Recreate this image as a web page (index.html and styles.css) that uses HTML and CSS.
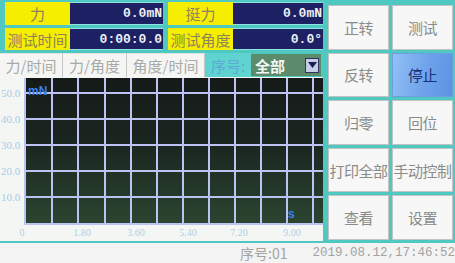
FILE: index.html
```html
<!DOCTYPE html>
<html lang="zh">
<head>
<meta charset="utf-8">
<title>测试</title>
<link rel="stylesheet" href="styles.css">
</head>
<body>
<div class="screen">
  <div class="left">
    <div class="readings">
      <div class="lbl">力</div><div class="val">0.0mN</div>
      <div class="lbl lbl2">挺力</div><div class="val">0.0mN</div>
      <div class="lbl">测试时间</div><div class="val">0:00:0.0</div>
      <div class="lbl lbl2">测试角度</div><div class="val">0.0°</div>
    </div>
    <div class="tabs">
      <div class="tab t1">力/时间</div>
      <div class="tab t2">力/角度</div>
      <div class="tab t3">角度/时间</div>
      <div class="seq">序号:</div>
      <div class="select"><span class="sel-text">全部</span><span class="arrow"><svg width="9" height="6" viewBox="0 0 9 6"><path d="M0 0H9L4.5 6Z" fill="#1a1f50"/></svg></span></div>
    </div>
    <div class="chart">
      <svg width="323" height="166" viewBox="0 0 323 166">
        <defs>
          <linearGradient id="pg" x1="0" y1="0" x2="0" y2="1">
            <stop offset="0" stop-color="#151a18"/>
            <stop offset="0.45" stop-color="#1b2620"/>
            <stop offset="1" stop-color="#2b4630"/>
          </linearGradient>
        </defs>
        <g class="ylab">
          <text x="1" y="20">50.0</text>
          <text x="1" y="46">40.0</text>
          <text x="1" y="72">30.0</text>
          <text x="1" y="98">20.0</text>
          <text x="1" y="124">10.0</text>
        </g>
        <rect x="25" y="1" width="298" height="147" fill="url(#pg)"/>
        <g class="grid">
          <line x1="25" y1="1" x2="25" y2="148"/>
          <line x1="52" y1="1" x2="52" y2="148"/>
          <line x1="78" y1="1" x2="78" y2="148"/>
          <line x1="105" y1="1" x2="105" y2="148"/>
          <line x1="131" y1="1" x2="131" y2="148"/>
          <line x1="157" y1="1" x2="157" y2="148"/>
          <line x1="183" y1="1" x2="183" y2="148"/>
          <line x1="209" y1="1" x2="209" y2="148"/>
          <line x1="235" y1="1" x2="235" y2="148"/>
          <line x1="261" y1="1" x2="261" y2="148"/>
          <line x1="287" y1="1" x2="287" y2="148"/>
          <line x1="313" y1="1" x2="313" y2="148"/>
          <line x1="25" y1="16" x2="323" y2="16"/>
          <line x1="25" y1="42" x2="323" y2="42"/>
          <line x1="25" y1="68" x2="323" y2="68"/>
          <line x1="25" y1="94" x2="323" y2="94"/>
          <line x1="25" y1="120" x2="323" y2="120"/>
          <line x1="25" y1="147" x2="323" y2="147"/>
        </g>
        <text class="unit" x="28" y="18">mN</text>
        <text class="unit" x="288" y="141">s</text>
        <g class="xlab">
          <text x="22" y="159">0</text>
          <text x="82" y="159">1.80</text>
          <text x="136" y="159">3.60</text>
          <text x="188" y="159">5.40</text>
          <text x="239" y="159">7.20</text>
          <text x="292" y="159">9.00</text>
        </g>
      </svg>
    </div>
  </div>
  <div class="buttons">
    <div class="btn">正转</div>
    <div class="btn">测试</div>
    <div class="btn">反转</div>
    <div class="btn active">停止</div>
    <div class="btn">归零</div>
    <div class="btn">回位</div>
    <div class="btn">打印全部</div>
    <div class="btn">手动控制</div>
    <div class="btn">查看</div>
    <div class="btn">设置</div>
  </div>
  <div class="status">
    <span class="seqno">序号:01</span>
    <span class="date">2019.08.12,17:46:52</span>
  </div>
</div>
</body>
</html>
```
FILE: styles.css
```css
html, body {
  margin: 0;
  padding: 0;
  background: #4fc8c1;
}
.screen {
  width: 455px;
  height: 263px;
  display: grid;
  grid-template-columns: 325px 130px;
  grid-template-rows: 243px 20px;
  background: #4fc8c1;
  font-family: "Noto Sans CJK SC", "Noto Sans", sans-serif;
  overflow: hidden;
}
.left {
  display: flex;
  flex-direction: column;
}
.readings {
  display: grid;
  grid-template-columns: 65px 93px 70px 90px;
  grid-template-rows: 23px 22px;
  row-gap: 3px;
  padding: 2px 0 0 5px;
}
.lbl {
  background: #f6ee00;
  color: #8e8258;
  font-size: 15px;
  line-height: 1;
  display: flex;
  align-items: center;
  justify-content: center;
  white-space: nowrap;
  overflow: hidden;
}
.lbl2 {
  margin-left: 5px;
}
.val {
  background: #1d2163;
  color: #eef0f6;
  font-family: "Liberation Mono", monospace;
  font-size: 13px;
  font-weight: bold;
  display: flex;
  align-items: center;
  justify-content: flex-end;
  padding-right: 1px;
  border-top: 1px solid #8fe3dd;
  border-bottom: 1px solid #8fe3dd;
  box-sizing: border-box;
}
.tabs {
  display: flex;
  height: 24px;
  margin-top: 3px;
}
.tab {
  background: #f5f6f4;
  color: #a8aaa8;
  font-size: 15px;
  display: flex;
  align-items: center;
  justify-content: center;
  border-right: 1px solid #c4c8c4;
  border-top: 1px solid #e2e4e2;
  box-sizing: border-box;
  white-space: nowrap;
}
.t1 { width: 63px; }
.t2 { width: 64px; }
.t3 { width: 78px; }
.seq {
  width: 46px;
  color: #5fa8d8;
  font-size: 15px;
  display: flex;
  align-items: center;
  justify-content: center;
  background: #5ed3cf;
}
.select {
  width: 70px;
  margin: 1px 0;
  background: #5c8b6b;
  display: flex;
  align-items: center;
  justify-content: space-between;
  padding: 0 2px 0 4px;
  box-sizing: border-box;
}
.sel-text {
  color: #f4f6f4;
  font-size: 15px;
  font-weight: bold;
}
.arrow {
  width: 14px;
  height: 15px;
  background: #c6cbe6;
  border: 1px solid #30355c;
  display: flex;
  align-items: center;
  justify-content: center;
  box-sizing: border-box;
}
.chart {
  width: 323px;
  height: 164px;
  background: #f4f6f4;
  border-bottom: 2px solid #4fc8c1;
}
.chart svg {
  display: block;
}
.ylab text {
  font-family: "Liberation Serif", serif;
  font-size: 11px;
  fill: #a6cbe6;
}
.xlab text {
  font-family: "Liberation Serif", serif;
  font-size: 10px;
  fill: #b0cfe6;
  text-anchor: middle;
}
.grid line {
  stroke: #bcc3f2;
  stroke-width: 2;
}
.unit {
  font-family: "Liberation Sans", sans-serif;
  font-size: 12px;
  font-weight: bold;
  fill: #3a7ff0;
}
.buttons {
  display: grid;
  grid-template-columns: 61px 61px;
  grid-template-rows: repeat(5, 1fr);
  gap: 3px;
  padding: 5px 2px 3px 3px;
}
.btn {
  background: #f6f7f6;
  border: 1px solid #c2c4c2;
  color: #8a8c8a;
  font-size: 15px;
  display: flex;
  align-items: center;
  justify-content: center;
  white-space: nowrap;
  letter-spacing: -0.5px;
}
.btn.active {
  background: linear-gradient(100deg, #92c0f6 0%, #6ea3eb 55%, #5c92e2 100%);
  color: #1b2f7a;
  border-color: #6f9ee0;
}
.status {
  grid-column: 1 / -1;
  background: #f2f3f2;
  display: flex;
  align-items: center;
  padding-left: 240px;
  color: #a2a4a2;
}
.seqno {
  font-size: 14px;
  width: 74px;
}
.date {
  font-family: "Liberation Mono", monospace;
  font-size: 12.5px;
  white-space: nowrap;
}
```
